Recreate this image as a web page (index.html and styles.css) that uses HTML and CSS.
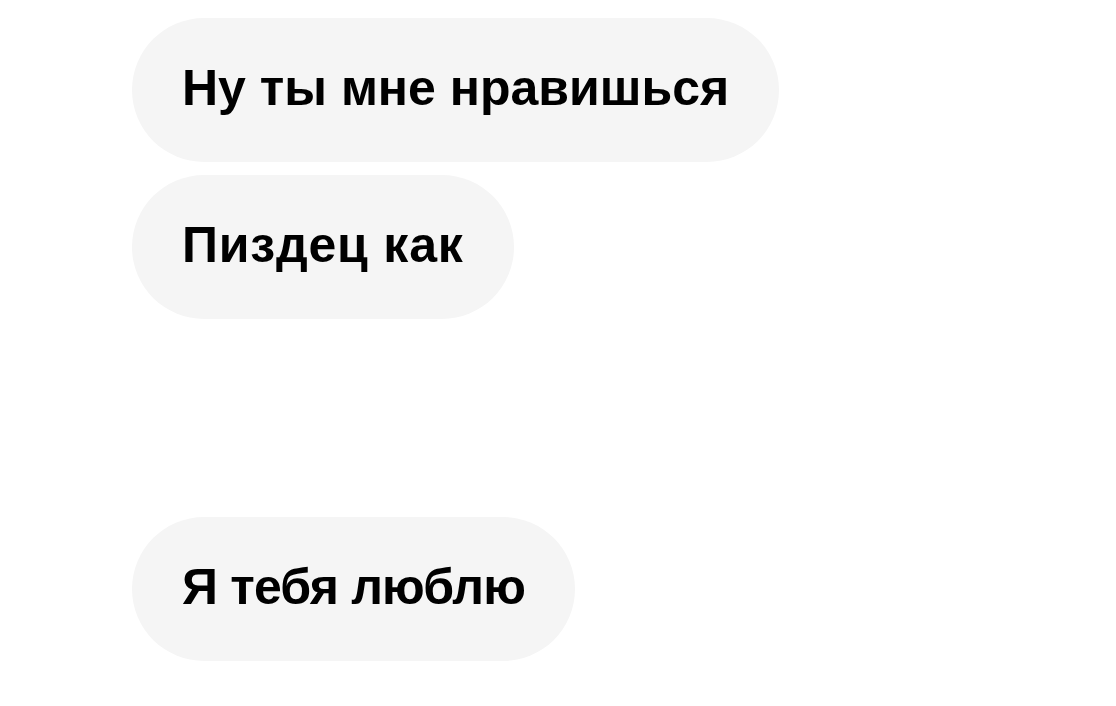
FILE: index.html
```html
<!DOCTYPE html>
<html lang="ru">
<head>
    <meta charset="UTF-8">
    <title>Чат</title>
    <link rel="stylesheet" href="styles.css">
</head>
<body>
    <div class="chat">
        <div class="msg">Ну ты мне нравишься</div>
        <div class="msg msg-wide">Пиздец как</div>
        <div class="msg msg-late msg-tight">Я тебя люблю</div>
    </div>
</body>
</html>
```
FILE: styles.css
```css
body {
    margin: 0;
    background-color: #fff;
    font-family: "Liberation Sans", Arial, sans-serif;
}

.chat {
    display: flex;
    flex-direction: column;
    align-items: flex-start;
    gap: 13px;
    padding: 18px 0 0 132px;
}

.msg {
    display: flex;
    align-items: center;
    height: 144px;
    padding: 0 50px 4px 50px;
    box-sizing: border-box;
    border-radius: 72px;
    background-color: #f5f5f5;
    color: #000;
    font-size: 50px;
    font-weight: bold;
}

.msg-wide {
    letter-spacing: 0.8px;
}

.msg-tight {
    letter-spacing: -0.8px;
}

.msg-late {
    margin-top: 185px;
}
```
